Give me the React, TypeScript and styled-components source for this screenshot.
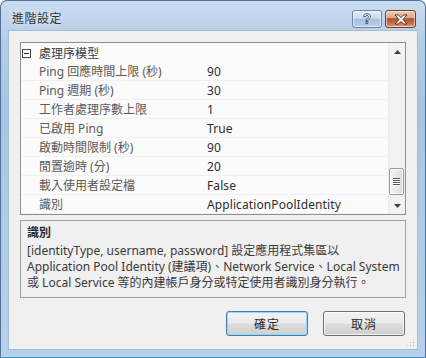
import React from 'react';
import styled, { createGlobalStyle } from 'styled-components';

const GlobalStyle = createGlobalStyle`
    html, body {
        margin: 0;
        padding: 0;
        background: #ffffff;
    }
    body {
        font-family: "Noto Sans", "Noto Sans CJK TC", sans-serif;
        font-size: 12px;
    }
`;

const Frame = styled.div`
    box-sizing: border-box;
    width: 426px;
    height: 358px;
    display: flex;
    flex-direction: column;
    padding: 0 7px 7px 7px;
    border: 1px solid #4f7199;
    border-bottom-color: #2f9fc8;
    border-radius: 7px 7px 0 0;
    background: linear-gradient(180deg, #c9dcf0 0%, #b4cce7 12%, #aac4e3 30%, #b8d0ea 100%);
`;

const TitleBar = styled.div`
    height: 29px;
    display: flex;
    align-items: center;
    padding-left: 4px;
`;

const Title = styled.div`
    flex: 1;
    font-size: 12px;
    color: #333333;
    letter-spacing: 0.5px;
    padding-top: 5px;
    text-shadow: 0 0 6px rgba(255, 255, 255, 0.9);
`;

const CaptionButtons = styled.div`
    display: flex;
    gap: 3px;
    margin-right: 2px;
    align-self: flex-start;
    padding-top: 9px;
`;

const CaptionButton = styled.div<{ $close?: boolean }>`
    box-sizing: border-box;
    width: ${p => (p.$close ? 31 : 30)}px;
    height: 18px;
    display: flex;
    align-items: center;
    justify-content: center;
    border-radius: 3px;
    border: 1px solid ${p => (p.$close ? '#6e3b25' : '#6f87a3')};
    background: ${p =>
        p.$close
            ? 'linear-gradient(180deg, #ecc9b3 0%, #dfa889 42%, #b5532d 48%, #c2643c 70%, #dea07c 100%)'
            : 'linear-gradient(180deg, #e4eef8 0%, #c9dbee 45%, #a8c2de 52%, #b7cfe8 100%)'};
    box-shadow: inset 0 0 0 1px rgba(255, 255, 255, 0.55);
`;

const Client = styled.div`
    flex: 1;
    display: flex;
    flex-direction: column;
    background: #f0f0f0;
    border: 1px solid #a5bcd6;
    padding: 11px 11px 13px 11px;
    position: relative;
`;

const Grid = styled.div`
    height: 173px;
    box-sizing: border-box;
    display: flex;
    border: 1px solid #8f8f8f;
    background: #fbfbfb;
`;

const List = styled.div`
    flex: 1;
    display: flex;
    flex-direction: column;
`;

const Row = styled.div`
    height: 19px;
    box-sizing: border-box;
    display: flex;
    align-items: center;
    padding-top: 1px;
    border-bottom: 1px solid #f1f1f1;
    line-height: 18px;
`;

const Category = styled.div`
    height: 19px;
    display: flex;
    align-items: center;
    padding-left: 1px;
    padding-top: 1px;
    box-sizing: border-box;
    color: #3a3a3a;
`;

const Expander = styled.div`
    box-sizing: border-box;
    width: 9px;
    height: 9px;
    border: 1px solid #4a4a4a;
    display: flex;
    align-items: center;
    justify-content: center;
    margin-right: 8px;
    background: #ffffff;
    &::after {
        content: '';
        width: 5px;
        height: 1px;
        background: #2a2a2a;
    }
`;

const Label = styled.div`
    width: 168px;
    padding-left: 18px;
    color: #5a5a5a;
    white-space: nowrap;
`;

const Value = styled.div`
    color: #2e2e2e;
    white-space: nowrap;
    letter-spacing: 0.1px;
`;

const ScrollBar = styled.div`
    width: 16px;
    display: flex;
    flex-direction: column;
    background: #f2f2f2;
    border-left: 1px solid #ececec;
`;

const ArrowButton = styled.div`
    height: 17px;
    display: flex;
    align-items: center;
    justify-content: center;
`;

const Track = styled.div`
    flex: 1;
    display: flex;
    flex-direction: column;
    background-image: radial-gradient(#e6e6e6 0.6px, transparent 0.6px);
    background-size: 2px 2px;
`;

const Thumb = styled.div`
    box-sizing: border-box;
    width: 15px;
    height: 27px;
    border: 1px solid #979797;
    border-radius: 2px;
    background: linear-gradient(90deg, #f3f3f3 0%, #e9e9e9 50%, #d9d9d9 100%);
    display: flex;
    flex-direction: column;
    align-items: center;
    justify-content: center;
    gap: 1px;
    box-shadow: inset 0 0 0 1px rgba(255, 255, 255, 0.8);
`;

const Grip = styled.div`
    width: 7px;
    height: 1px;
    background: #555;
    box-shadow: 0 1px 0 #fff;
`;

const Description = styled.div`
    margin-top: 5px;
    height: 78px;
    box-sizing: border-box;
    border: 1px solid #a0a0a0;
    padding: 4px 6px 3px 6px;
    line-height: 16px;
    color: #3a3a3a;
    white-space: nowrap;
`;

const DescTitle = styled.div`
    font-weight: bold;
    color: #2a2a2a;
    margin-bottom: 2px;
`;

const ButtonRow = styled.div`
    margin-top: 13px;
    display: flex;
    justify-content: flex-end;
    gap: 15px;
    padding-right: 1px;
`;

const Button = styled.button<{ $default?: boolean }>`
    box-sizing: border-box;
    width: 82px;
    height: 25px;
    font-family: inherit;
    font-size: 12px;
    color: #2a2a2a;
    border-radius: 3px;
    border: 1px solid ${p => (p.$default ? '#3c7fb1' : '#707070')};
    background: linear-gradient(180deg, #f2f2f2 0%, #ebebeb 48%, #dddddd 52%, #cfcfcf 100%);
    box-shadow: inset 0 0 0 1px ${p => (p.$default ? '#9fd5f2' : 'rgba(255,255,255,0.7)')};
    letter-spacing: 1px;
    padding: 0;
`;

const SizeGrip = styled.div`
    position: absolute;
    right: 2px;
    bottom: 2px;
    width: 9px;
    height: 9px;
    background-image: radial-gradient(#9aa9ba 0.8px, transparent 1px);
    background-size: 3px 3px;
    clip-path: polygon(100% 0, 100% 100%, 0 100%);
`;

const rows: [string, string][] = [
    ['Ping 回應時間上限 (秒)', '90'],
    ['Ping 週期 (秒)', '30'],
    ['工作者處理序數上限', '1'],
    ['已啟用 Ping', 'True'],
    ['啟動時間限制 (秒)', '90'],
    ['閒置逾時 (分)', '20'],
    ['載入使用者設定檔', 'False'],
    ['識別', 'ApplicationPoolIdentity'],
];

const Arrow = ({ down }: { down?: boolean }) => (
    <svg width="7" height="4" viewBox="0 0 7 4">
        <path d={down ? 'M0 0 H7 L3.5 4 Z' : 'M0 4 H7 L3.5 0 Z'} fill="#3f3f3f" />
    </svg>
);

export default function App() {
    return (
        <>
            <GlobalStyle />
            <Frame>
                <TitleBar>
                    <Title>進階設定</Title>
                    <CaptionButtons>
                        <CaptionButton>
                            <svg width="10" height="12" viewBox="0 0 10 12">
                                <path
                                    d="M1.5 3.5 C1.5 1.5 3 0.8 5 0.8 C7.2 0.8 8.5 2 8.5 3.6 C8.5 5.2 7 5.8 6.2 6.4 C5.8 6.7 5.7 7 5.7 7.6 H4 C4 6.6 4.3 6 5.2 5.4 C6 4.8 6.6 4.5 6.6 3.7 C6.6 3 6 2.5 5 2.5 C4 2.5 3.4 3 3.3 3.8 Z M4 8.6 H5.8 V10.6 H4 Z"
                                    fill="#ffffff"
                                    stroke="#2c4a6e"
                                    strokeWidth="0.9"
                                />
                            </svg>
                        </CaptionButton>
                        <CaptionButton $close>
                            <svg width="14" height="11" viewBox="0 0 14 11">
                                <path
                                    d="M1 1 H4.5 L7 3.6 L9.5 1 H13 L9 5.5 L13 10 H9.5 L7 7.4 L4.5 10 H1 L5 5.5 Z"
                                    fill="#ffffff"
                                    stroke="#4a2416"
                                    strokeWidth="0.9"
                                    strokeLinejoin="round"
                                />
                            </svg>
                        </CaptionButton>
                    </CaptionButtons>
                </TitleBar>
                <Client>
                    <Grid>
                        <List>
                            <Category>
                                <Expander />
                                處理序模型
                            </Category>
                            {rows.map(([label, value]) => (
                                <Row key={label}>
                                    <Label>{label}</Label>
                                    <Value>{value}</Value>
                                </Row>
                            ))}
                        </List>
                        <ScrollBar>
                            <ArrowButton>
                                <Arrow />
                            </ArrowButton>
                            <Track>
                                <Thumb style={{ marginTop: 108 }}>
                                    <Grip />
                                    <Grip />
                                    <Grip />
                                    <Grip />
                                </Thumb>
                            </Track>
                            <ArrowButton>
                                <Arrow down />
                            </ArrowButton>
                        </ScrollBar>
                    </Grid>
                    <Description>
                        <DescTitle>識別</DescTitle>
                        <div>[identityType, username, password] 設定應用程式集區以</div>
                        <div>Application Pool Identity (建議項)、Network Service、Local System</div>
                        <div>或 Local Service 等的內建帳戶身分或特定使用者識別身分執行。</div>
                    </Description>
                    <ButtonRow>
                        <Button $default>確定</Button>
                        <Button>取消</Button>
                    </ButtonRow>
                    <SizeGrip />
                </Client>
            </Frame>
        </>
    );
}
